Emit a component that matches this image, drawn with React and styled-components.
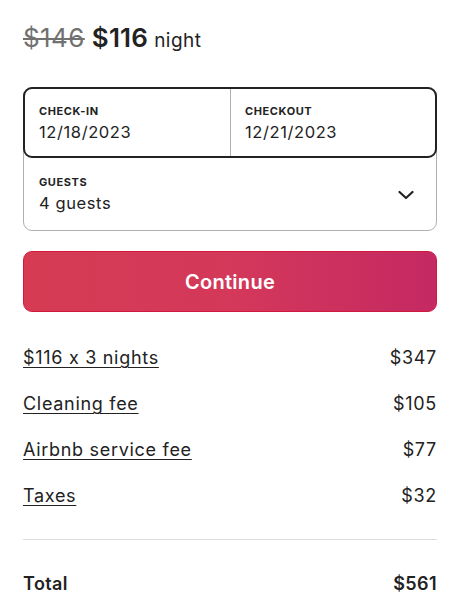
import styled, { createGlobalStyle } from "styled-components";

const GlobalStyle = createGlobalStyle`
  html, body {
    margin: 0;
    padding: 0;
    background: #fff;
  }
  body {
    font-family: Inter, "Noto Sans", "Liberation Sans", sans-serif;
    font-feature-settings: "calt" 0;
    color: #222222;
    -webkit-font-smoothing: antialiased;
  }
`;

const Page = styled.div`
  width: 454px;
  box-sizing: border-box;
  padding: 17px 17px 0 23px;
`;

const PriceLine = styled.div`
  display: flex;
  align-items: baseline;
  gap: 7px;
  height: 42px;
  line-height: 42px;
`;

const OldPrice = styled.span`
  font-size: 26px;
  letter-spacing: 0.4px;
  color: #717171;
  text-decoration: line-through;
  text-decoration-thickness: 2px;
`;

const NewPrice = styled.span`
  font-size: 26px;
  font-weight: 600;
  letter-spacing: 0.2px;
  color: #222;
`;

const Per = styled.span`
  font-size: 19px;
  letter-spacing: 0.5px;
  color: #222;
  margin-left: -1px;
`;

const Picker = styled.div`
  margin-top: 28px;
  border: 1px solid #b0b0b0;
  border-radius: 9px;
`;

const DatesRow = styled.div`
  display: grid;
  grid-template-columns: 1fr 1fr;
  margin: -1px;
  height: 71px;
  box-sizing: border-box;
  border: 2px solid #222;
  border-radius: 9px;
`;

const Field = styled.div`
  display: flex;
  flex-direction: column;
  justify-content: center;
  padding: 0 14px;
  border-left: ${(p) => (p.$divided ? "1px solid #b0b0b0" : "none")};
`;

const Label = styled.div`
  font-size: 11px;
  font-weight: 700;
  letter-spacing: 0.6px;
  line-height: 16px;
  text-transform: uppercase;
`;

const Value = styled.div`
  font-size: 16.5px;
  letter-spacing: 0.6px;
  line-height: 22px;
  margin-top: 2px;
`;

const GuestsRow = styled.div`
  display: flex;
  align-items: center;
  justify-content: space-between;
  height: 73px;
  padding: 0 22px 0 15px;
`;

const ChevronWrap = styled.span`
  display: flex;
  margin-top: 2px;
`;

const Chevron = () => (
  <ChevronWrap>
    <svg width="16" height="16" viewBox="0 0 16 16" fill="none">
      <path d="M1.5 5 L8 11 L14.5 5" stroke="#222" strokeWidth="2.2" strokeLinecap="round" strokeLinejoin="round" />
    </svg>
  </ChevronWrap>
);

const Button = styled.button`
  display: block;
  width: 100%;
  height: 61px;
  margin-top: 20px;
  border: 1px solid #d3183f;
  border-radius: 9px;
  background: linear-gradient(90deg, #d63b53 0%, #d4385a 50%, #c42962 100%);
  color: #fff;
  font-family: inherit;
  font-size: 20px;
  font-weight: 600;
  letter-spacing: 0.3px;
  cursor: pointer;
`;

const Lines = styled.div`
  display: flex;
  flex-direction: column;
  gap: 22px;
  margin-top: 34px;
`;

const Line = styled.div`
  display: flex;
  justify-content: space-between;
  align-items: center;
  font-size: 18px;
  letter-spacing: ${(p) => (p.$bold ? "0.4px" : "0.7px")};
  line-height: 24px;
  font-weight: ${(p) => (p.$bold ? 600 : 400)};
`;

const Link = styled.span`
  text-decoration: underline;
  text-decoration-thickness: 1px;
  text-underline-offset: 3px;
`;

const Divider = styled.hr`
  margin: 31px 0 0;
  border: none;
  border-top: 1px solid #dddddd;
`;

const TotalWrap = styled.div`
  margin-top: 32px;
`;

const items = [
  ["$116 x 3 nights", "$347"],
  ["Cleaning fee", "$105"],
  ["Airbnb service fee", "$77"],
  ["Taxes", "$32"],
];

export default function App() {
  return (
    <>
      <GlobalStyle />
      <Page>
        <PriceLine>
          <OldPrice>$146</OldPrice>
          <NewPrice>$116</NewPrice>
          <Per>night</Per>
        </PriceLine>
        <Picker>
          <DatesRow>
            <Field>
              <Label>Check-in</Label>
              <Value>12/18/2023</Value>
            </Field>
            <Field $divided>
              <Label>Checkout</Label>
              <Value>12/21/2023</Value>
            </Field>
          </DatesRow>
          <GuestsRow>
            <div>
              <Label>Guests</Label>
              <Value>4 guests</Value>
            </div>
            <Chevron />
          </GuestsRow>
        </Picker>
        <Button>Continue</Button>
        <Lines>
          {items.map(([name, amount]) => (
            <Line key={name}>
              <Link>{name}</Link>
              <span>{amount}</span>
            </Line>
          ))}
        </Lines>
        <Divider />
        <TotalWrap>
          <Line $bold>
            <span>Total</span>
            <span>$561</span>
          </Line>
        </TotalWrap>
      </Page>
    </>
  );
}
